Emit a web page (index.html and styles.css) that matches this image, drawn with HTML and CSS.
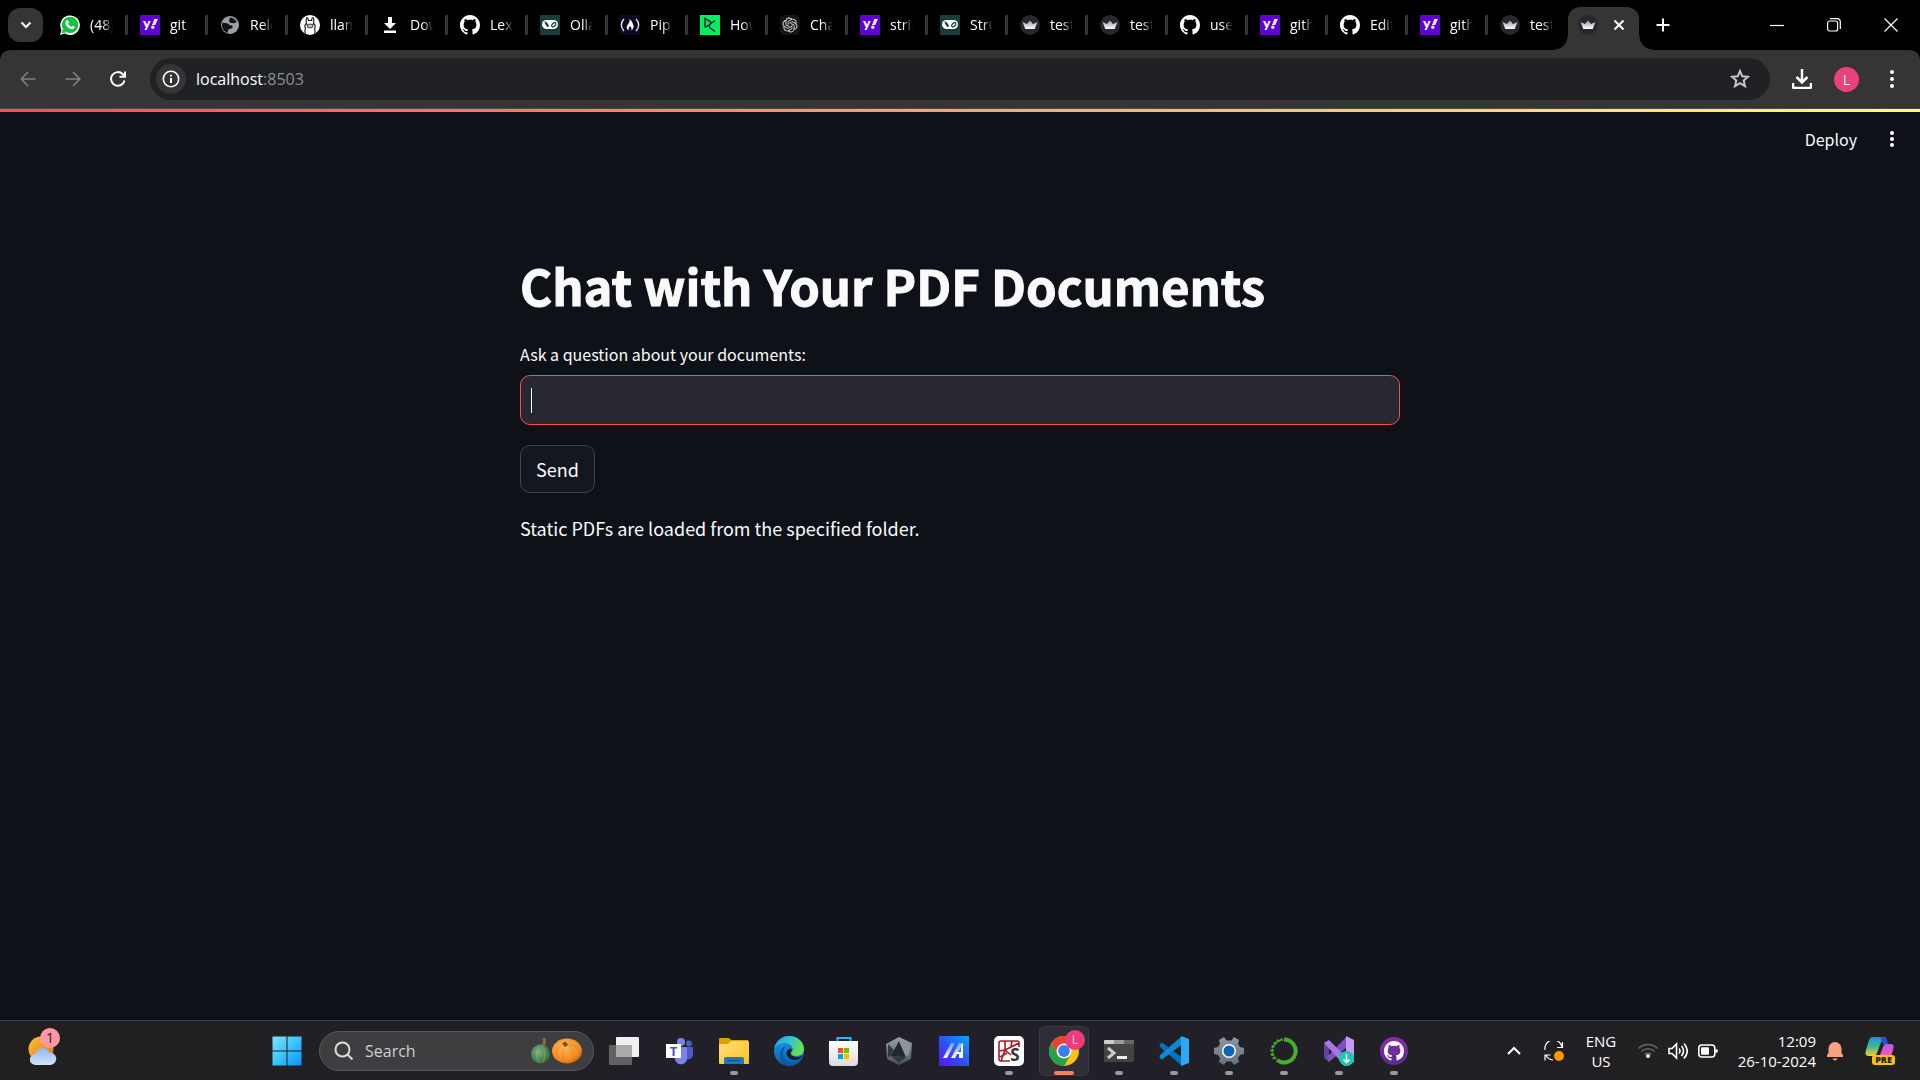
FILE: index.html
```html
<!DOCTYPE html>
<html lang="en">
<head>
<meta charset="utf-8">
<title>test</title>
<link rel="stylesheet" href="styles.css">
</head>
<body>
<svg class="sprite" aria-hidden="true">
  <defs>
    <linearGradient id="g-win" x1="0" y1="0" x2="1" y2="1"><stop offset="0" stop-color="#7fe0ff"/><stop offset=".5" stop-color="#3cc3fb"/><stop offset="1" stop-color="#0a8ffb"/></linearGradient>
    <linearGradient id="g-sun" x1="0" y1="0" x2="1" y2="1"><stop offset="0" stop-color="#f5c53a"/><stop offset="1" stop-color="#ef6c0c"/></linearGradient>
    <linearGradient id="g-cloud" x1="0" y1="0" x2="0" y2="1"><stop offset="0" stop-color="#8fb8f4"/><stop offset="1" stop-color="#d3e3fb"/></linearGradient>
    <linearGradient id="g-folder" x1="0" y1="0" x2="1" y2="1"><stop offset="0" stop-color="#ffe07a"/><stop offset="1" stop-color="#fbbf24"/></linearGradient>
    <linearGradient id="g-edge1" x1="0" y1="0" x2="1" y2=".5"><stop offset="0" stop-color="#1f9be0"/><stop offset=".5" stop-color="#35c1d6"/><stop offset="1" stop-color="#6be04a"/></linearGradient>
    <linearGradient id="g-edge2" x1="0" y1="0" x2="0" y2="1"><stop offset="0" stop-color="#1b9be6"/><stop offset="1" stop-color="#0b5fb4"/></linearGradient>
    <linearGradient id="g-store" x1="0" y1="0" x2="0" y2="1"><stop offset="0" stop-color="#ffffff"/><stop offset="1" stop-color="#dcdcdc"/></linearGradient>
    <linearGradient id="g-myasus" x1="0" y1="1" x2="1" y2="0"><stop offset="0" stop-color="#5a12f5"/><stop offset=".5" stop-color="#2a55f6"/><stop offset="1" stop-color="#0aa6fa"/></linearGradient>
    <linearGradient id="g-slash" x1="0" y1="0" x2="0" y2="1"><stop offset="0" stop-color="#fff" stop-opacity=".35"/><stop offset="1" stop-color="#fff"/></linearGradient>
    <linearGradient id="g-steel" x1="0" y1="0" x2="0" y2="1"><stop offset="0" stop-color="#9aa1a8"/><stop offset="1" stop-color="#4a5058"/></linearGradient>
    <linearGradient id="g-gear" x1="0" y1="0" x2="0" y2="1"><stop offset="0" stop-color="#8e979f"/><stop offset="1" stop-color="#66717b"/></linearGradient>
    <linearGradient id="g-cop1" x1="0" y1="0" x2="0" y2="1"><stop offset="0" stop-color="#1d8df0"/><stop offset=".5" stop-color="#3dba8c"/><stop offset="1" stop-color="#f4cf2a"/></linearGradient>
    <linearGradient id="g-cop2" x1="0" y1="0" x2="0" y2="1"><stop offset="0" stop-color="#b558e8"/><stop offset=".6" stop-color="#f0609a"/><stop offset="1" stop-color="#f68a4c"/></linearGradient>
    <radialGradient id="g-pumpkin" cx=".4" cy=".35" r=".75"><stop offset="0" stop-color="#ffb84f"/><stop offset=".7" stop-color="#f28c22"/><stop offset="1" stop-color="#b8560e"/></radialGradient>
    <radialGradient id="g-gourd" cx=".4" cy=".4" r=".7"><stop offset="0" stop-color="#7fb57a"/><stop offset="1" stop-color="#2f6238"/></radialGradient>
    <linearGradient id="g-ghd" x1="0" y1="0" x2="0" y2="1"><stop offset="0" stop-color="#8a2da8"/><stop offset="1" stop-color="#5a2a92"/></linearGradient>
    <linearGradient id="g-crown" x1="0" y1="0" x2="0" y2="1"><stop offset="0" stop-color="#9a9a9a"/><stop offset="1" stop-color="#ffffff"/></linearGradient>
  </defs>
  <symbol id="whatsapp" viewBox="0 0 20 20"><path fill="#fff" d="M0 20l1.500-5A9.800 9.800 0 1 1 5 18.600z"/><circle cx="10.100" cy="9.900" r="8.200" fill="#12c143"/><path fill="#12c143" d="M1.700 18.400l1.200-4.500 3.200 3.300z"/><path fill="#fff" d="M6.800 5.300c.4-.4 1.100-.3 1.300.2l.7 1.700c.1.300 0 .6-.8 1.500.7 1.400 1.900 2.500 3.300 3 .7-.9.900-1.100 1.300-1l1.900.9c.4.200.3 1-.1 1.500-.8 1-2.100 1.200-3.400.8-2.500-.8-4.500-2.700-5.400-5C5.100 7.500 5.800 6 6.800 5.300z"/></symbol>
  <symbol id="yahoo" viewBox="0 0 20 20"><path fill="#5f01d1" d="M0 0h20v20H0z"/><text x="3" y="13" font-family="Lato, sans-serif" font-weight="900" font-size="14" fill="#fff">y</text><path fill="#fff" d="M14.400 4H17.800L15.200 10H12z"/><circle cx="12.800" cy="12.200" r="1.600" fill="#fff"/></symbol>
  <symbol id="globe" viewBox="0 0 20 20"><circle cx="10" cy="10" r="9" fill="#9aa0a6"/><path fill="#111" d="M2.500 7.500l4 .8c2 0 2.500 2.200 4.500 2.200 2.200 0 2.200 2 .5 3l-3 .8-1 3.600A8 8 0 0 1 2.500 7.500zM10 2.500c3 .3 5.500 2 6.800 4.700l-3 1.100-3.800-.5-1-2.300z"/></symbol>
  <symbol id="llama" viewBox="0 0 20 20"><circle cx="10" cy="10" r="10" fill="#fff"/><path fill="none" stroke="#222" stroke-width="1.200" d="M5.500 18.500c-1-2-.8-3.500 0-5-1-2-.6-4 1-5C6 5 6 3 7 2.500c1 0 1.300 1.500 1.400 3h3.200c.1-1.500.4-3 1.400-3 1 .5 1 2.500.5 6 1.600 1 2 3 1 5 .8 1.500 1 3 0 5"/><ellipse cx="10" cy="11" rx="3" ry="2" fill="#bbb" stroke="#222" stroke-width=".8"/><circle cx="7" cy="9.500" r=".7" fill="#222"/><circle cx="13" cy="9.500" r=".7" fill="#222"/></symbol>
  <symbol id="get" viewBox="0 0 20 20"><path fill="#fff" d="M8 2h4v6h4l-6 6-6-6h4zM4 15.500h12V18H4z"/></symbol>
  <symbol id="github" viewBox="0 0 16 16"><path fill="#fff" d="M8 0C3.580 0 0 3.580 0 8c0 3.540 2.290 6.530 5.470 7.590.4.070.55-.17.55-.38 0-.19-.01-.82-.01-1.490-2.010.37-2.530-.49-2.690-.94-.09-.23-.48-.94-.82-1.130-.28-.15-.68-.52-.01-.53.63-.01 1.080.58 1.230.82.72 1.210 1.870.87 2.330.66.07-.52.28-.87.51-1.070-1.780-.2-3.640-.89-3.640-3.950 0-.87.31-1.590.82-2.150-.08-.2-.36-1.020.08-2.120 0 0 .67-.21 2.200.82.64-.18 1.320-.27 2-.27s1.360.09 2 .27c1.530-1.040 2.200-.82 2.200-.82.44 1.100.16 1.920.08 2.120.51.56.82 1.270.82 2.150 0 3.070-1.870 3.750-3.650 3.950.29.25.54.73.54 1.480 0 1.070-.01 1.930-.01 2.200 0 .21.15.46.55.38A8.010 8.010 0 0 0 16 8c0-4.420-3.580-8-8-8z"/></symbol>
  <symbol id="chain" viewBox="0 0 20 20"><path fill="#1c3c3c" d="M0 0h20v20H0z"/><rect x="2" y="5" width="16" height="9" rx="4.500" fill="#fff"/><path fill="#1c3c3c" d="M4.500 6.500c2 0 4 2.500 4.500 5-1.500 1-2.500.2-2.700-1C5.500 9.500 4.500 8 4.500 6.500z"/><path fill="none" stroke="#1c3c3c" stroke-width="1.200" d="M12 11.500a1.500 1.500 0 0 1 0-2l1.500-1.500a1.400 1.400 0 0 1 2 2l-1.500 1.500a1.400 1.400 0 0 1-2 0"/></symbol>
  <symbol id="fcc" viewBox="0 0 20 20"><path fill="#0a0a23" d="M0 0h20v20H0z"/><path fill="none" stroke="#eee" stroke-width="1.300" d="M4 4C.5 7.500.5 12.500 4 16M16 4c3.500 3.500 3.500 8.500 0 12"/><path fill="#fff" d="M9.500 4c3 2.500 3 4 3.800 6 .8 2.500-.3 4.500-2 5.500.5-1.500.3-3-1.300-4.500-1.300 1.500-1.800 3-1 4.500-2.500-1-3-3.500-1.500-5.500C9 8 10 6.500 9.500 4z"/></symbol>
  <symbol id="camp" viewBox="0 0 20 20"><path fill="#03ef62" d="M0 0h20v20H0z"/><path fill="none" stroke="#05192d" stroke-width="1.400" d="M5 12.500v-9l5.500 3.200v2.400L5 12.500M15 5.500l-5.500 4v3l5.500 4"/></symbol>
  <symbol id="gpt" viewBox="0 0 24 24"><rect width="24" height="24" rx="5" fill="#141414"/><path fill="#ddd" transform="translate(3 3) scale(.75)" d="M22.282 9.821a5.985 5.985 0 0 0-.516-4.910 6.046 6.046 0 0 0-6.510-2.900A6.065 6.065 0 0 0 4.981 4.182a5.985 5.985 0 0 0-3.998 2.900 6.046 6.046 0 0 0 .743 7.097 5.980 5.980 0 0 0 .51 4.911 6.051 6.051 0 0 0 6.515 2.900A5.985 5.985 0 0 0 13.260 24a6.056 6.056 0 0 0 5.772-4.206 5.990 5.990 0 0 0 3.998-2.900 6.056 6.056 0 0 0-.747-7.073zM13.260 22.430a4.476 4.476 0 0 1-2.876-1.040l.141-.081 4.779-2.758a.795.795 0 0 0 .393-.681v-6.737l2.020 1.168a.071.071 0 0 1 .038.052v5.583a4.504 4.504 0 0 1-4.495 4.494zM3.600 18.304a4.471 4.471 0 0 1-.535-3.014l.142.085 4.783 2.759a.771.771 0 0 0 .780 0l5.843-3.369v2.332a.080.080 0 0 1-.033.062L9.740 19.950a4.500 4.500 0 0 1-6.140-1.646zM2.341 7.896a4.485 4.485 0 0 1 2.366-1.973V11.600a.766.766 0 0 0 .388.677l5.815 3.355-2.020 1.168a.076.076 0 0 1-.071 0l-4.830-2.786A4.504 4.504 0 0 1 2.340 7.872zm16.597 3.856l-5.833-3.388L15.119 7.200a.076.076 0 0 1 .071 0l4.830 2.791a4.494 4.494 0 0 1-.676 8.105v-5.678a.790.790 0 0 0-.407-.667zm2.010-3.023l-.141-.085-4.774-2.782a.776.776 0 0 0-.785 0L9.409 9.230V6.897a.066.066 0 0 1 .028-.061l4.830-2.787a4.500 4.500 0 0 1 6.680 4.660zM8.307 12.863l-2.020-1.164a.080.080 0 0 1-.038-.057V6.075a4.500 4.500 0 0 1 7.375-3.453l-.142.080L8.704 5.460a.795.795 0 0 0-.393.681zm1.097-2.365l2.602-1.500 2.607 1.500v2.999l-2.597 1.500-2.607-1.500z"/></symbol>
  <symbol id="crown" viewBox="0 0 20 20"><circle cx="10" cy="10" r="10" fill="#262730"/><path fill="url(#g-crown)" d="M2.500 7l4.500 2 3-3.500 3 3.500 4.500-2-2.800 7H5.300z"/></symbol>
  <symbol id="chrome" viewBox="0 0 30 30"><circle cx="15" cy="15" r="15" fill="#fbc116"/><path fill="#ea4335" d="M2 7.500A15 15 0 0 1 28 7.500H15L8.500 18.700z"/><path fill="#25a04b" d="M2 7.500A15 15 0 0 0 15 30l6.500-11.200h-13z"/><circle cx="15" cy="15" r="7.500" fill="#fff"/><circle cx="15" cy="15" r="5.900" fill="#3b7fea"/></symbol>
</svg>

<header class="browser">
  <div class="strip">
    <button class="tab-search" aria-label="Search tabs"><svg width="12" height="8" viewBox="0 0 12 8"><path class="line bold" d="M1.500 1.500L6 6l4.500-4.500"/></svg></button>
    <nav class="tabs" aria-label="Tabs">
      <a class="tab" href="#"><svg class="fav"><use href="#whatsapp"/></svg><span class="name">(48)</span></a>
      <a class="tab" href="#"><svg class="fav"><use href="#yahoo"/></svg><span class="name">git</span></a>
      <a class="tab" href="#"><svg class="fav"><use href="#globe"/></svg><span class="name">Rele</span></a>
      <a class="tab" href="#"><svg class="fav"><use href="#llama"/></svg><span class="name">llam</span></a>
      <a class="tab" href="#"><svg class="fav"><use href="#get"/></svg><span class="name">Dow</span></a>
      <a class="tab" href="#"><svg class="fav"><use href="#github"/></svg><span class="name">Lex</span></a>
      <a class="tab" href="#"><svg class="fav"><use href="#chain"/></svg><span class="name">Olla</span></a>
      <a class="tab" href="#"><svg class="fav"><use href="#fcc"/></svg><span class="name">Pip</span></a>
      <a class="tab" href="#"><svg class="fav"><use href="#camp"/></svg><span class="name">How</span></a>
      <a class="tab" href="#"><svg class="fav"><use href="#gpt"/></svg><span class="name">Cha</span></a>
      <a class="tab" href="#"><svg class="fav"><use href="#yahoo"/></svg><span class="name">strin</span></a>
      <a class="tab" href="#"><svg class="fav"><use href="#chain"/></svg><span class="name">StrO</span></a>
      <a class="tab" href="#"><svg class="fav"><use href="#crown"/></svg><span class="name">test</span></a>
      <a class="tab" href="#"><svg class="fav"><use href="#crown"/></svg><span class="name">test</span></a>
      <a class="tab" href="#"><svg class="fav"><use href="#github"/></svg><span class="name">use</span></a>
      <a class="tab" href="#"><svg class="fav"><use href="#yahoo"/></svg><span class="name">gith</span></a>
      <a class="tab" href="#"><svg class="fav"><use href="#github"/></svg><span class="name">Edit</span></a>
      <a class="tab" href="#"><svg class="fav"><use href="#yahoo"/></svg><span class="name">gith</span></a>
      <a class="tab last" href="#"><svg class="fav"><use href="#crown"/></svg><span class="name">test</span></a>
      <div class="tab-active"><svg class="fav"><use href="#crown"/></svg><button class="plain" aria-label="Close tab"><svg width="12" height="12" viewBox="0 0 12 12"><path class="line bold" d="M1.500 1.500l9 9M10.500 1.500l-9 9"/></svg></button></div>
    </nav>
    <button class="plain new-tab" aria-label="New tab"><svg width="14" height="14" viewBox="0 0 14 14"><path class="line bold" d="M7 .5v13M.5 7h13"/></svg></button>
    <div class="window-controls">
      <button class="plain" aria-label="Minimize"><svg width="14" height="14" viewBox="0 0 14 14"><path class="line" d="M0 7.500h14"/></svg></button>
      <button class="plain" aria-label="Restore"><svg width="14" height="14" viewBox="0 0 14 14"><rect class="line" x=".6" y="3" width="10" height="10" rx="2"/><path class="line" d="M3 .7h7A3.300 3.300 0 0 1 13.300 4v7"/></svg></button>
      <button class="plain" aria-label="Close"><svg width="14" height="14" viewBox="0 0 14 14"><path class="line" d="M.5.5l13 13M13.500.5l-13 13"/></svg></button>
    </div>
  </div>
  <div class="toolbar">
    <button class="plain nav-button dim" aria-label="Back"><svg width="16" height="16" viewBox="0 0 16 16"><path class="line medium" d="M15.500 8H1.500M8 1L1.200 8 8 15"/></svg></button>
    <button class="plain nav-button dim" aria-label="Forward"><svg width="16" height="16" viewBox="0 0 16 16"><path class="line medium" d="M.5 8h14M8 1l6.800 7L8 15"/></svg></button>
    <button class="plain nav-button" aria-label="Reload"><svg width="16" height="16" viewBox="0 0 16 16"><path class="line bold" d="M14.500 9.500A6.800 6.800 0 1 1 12.800 3.200L15 5.400M15 .5v5.300H9.500"/></svg></button>
    <div class="omnibox">
      <span class="info"><svg width="18" height="18" viewBox="0 0 18 18"><circle class="line medium" cx="9" cy="9" r="7.700"/><path class="line bold" d="M9 8v5M9 4.800v1.800"/></svg></span>
      <span class="url">localhost<span class="port">:8503</span></span>
      <button class="plain" aria-label="Bookmark"><svg width="20" height="20" viewBox="0 0 20 20"><path class="star" d="M10 2l2.300 5.300 5.700.5-4.300 3.800 1.300 5.600L10 14.200l-5 3 1.300-5.600L2 7.800l5.700-.5z"/></svg></button>
    </div>
    <button class="plain tool" aria-label="Downloads"><svg width="20" height="20" viewBox="0 0 20 20"><path class="line heavy" d="M10 0v13M4.500 8l5.500 5.500L15.500 8M1 14v3.500q0 1.500 1.500 1.500h15q1.500 0 1.500-1.500V14"/></svg></button>
    <button class="plain tool" aria-label="Profile"><span class="avatar">L</span></button>
    <button class="plain tool" aria-label="Menu"><svg width="4" height="18" viewBox="0 0 4 18"><circle cx="2" cy="2" r="2"/><circle cx="2" cy="9" r="2"/><circle cx="2" cy="16" r="2"/></svg></button>
  </div>
</header>

<main class="app">
  <div class="app-header">
    <button class="plain deploy">Deploy</button>
    <button class="plain tool" aria-label="App menu"><svg width="4" height="18" viewBox="0 0 4 18"><circle cx="2" cy="3" r="2"/><circle cx="2" cy="9" r="2"/><circle cx="2" cy="15" r="2"/></svg></button>
  </div>
  <form class="content">
    <h1>Chat with Your PDF Documents</h1>
    <label for="question">Ask a question about your documents:</label>
    <input id="question" type="text" autocomplete="off">
    <button class="send" type="button">Send</button>
    <p>Static PDFs are loaded from the specified folder.</p>
  </form>
</main>

<footer class="taskbar">
  <div class="side">
    <button class="plain" aria-label="Weather"><svg width="32" height="40" viewBox="0 0 32 40">
      <circle cx="13" cy="22" r="12.500" fill="url(#g-sun)"/><path fill="url(#g-cloud)" d="M8 38a6 5.500 0 0 1-.5-11 7.500 7.500 0 0 1 14-1.500A6.300 6.300 0 0 1 23 38z"/><circle cx="22" cy="11" r="10" fill="#ff98a2"/><text x="22" y="16" text-anchor="middle" font-family="Open Sans, sans-serif" font-size="14" fill="#222">1</text></svg></button>
  </div>
  <nav class="dock" aria-label="Taskbar">
    <button class="plain app-tile" aria-label="Start"><svg width="30" height="30" viewBox="0 0 30 30"><path fill="url(#g-win)" d="M.5.500h14v14H.5zM15.500.5h14v14h-14zM.5 15.500h14v14H.5zM15.500 15.500h14v14h-14z"/></svg></button>
    <div class="search">
      <svg width="20" height="20" viewBox="0 0 20 20"><circle class="line bold" cx="8.500" cy="8.500" r="7"/><path class="line bold" d="M13.500 13.500L18.500 18.500"/></svg>
      <input type="search" placeholder="Search" aria-label="Search">
      <svg width="54" height="28" viewBox="0 0 54 28"><path fill="none" stroke="#8a6652" stroke-width="3" d="M13 11c2-3 3-5 2-10"/><ellipse cx="11.500" cy="17" rx="9.500" ry="9.500" fill="url(#g-gourd)"/><path fill="none" stroke="#b5d6a5" opacity=".3" d="M11.500 8c-5 3-5 14-1 18M12 8c5 3 5 14 1 18"/><ellipse cx="38" cy="14" rx="15" ry="12.500" fill="url(#g-pumpkin)"/><path fill="none" stroke="#b8600f" opacity=".25" d="M35 8c-9 2-9 12-4 17M36 8c-3 5-3 14 0 18M38 8c7 3 8 12 5 17M39 7c10 2 13 8 10 14"/><path fill="#6c4b2c" d="M33 6l4-1 2 3-3 2z"/></svg>
    </div>
    <button class="plain app-tile" aria-label="Task view"><svg width="30" height="30" viewBox="0 0 30 30"><rect x="7" y="1" width="23" height="20" rx="1" fill="#f0f0f0"/><rect x="0" y="9" width="23" height="20" rx="1" fill="#777" opacity=".75"/><rect x="7" y="9" width="16" height="12" fill="#aaa"/></svg></button>
    <button class="plain app-tile" aria-label="Teams"><svg width="30" height="30" viewBox="0 0 30 30"><circle cx="17" cy="6" r="4" fill="#7b83eb"/><circle cx="25" cy="7.500" r="3" fill="#5059c9"/><path fill="#5059c9" d="M20 11h9v8a5 5 0 0 1-7 4z"/><path fill="#7b83eb" d="M11 11h12v9a6 6 0 0 1-12 4z"/><rect x="2" y="8" width="15" height="14" fill="#fff"/><text x="9.500" y="20" text-anchor="middle" font-family="Open Sans, sans-serif" font-weight="700" font-size="13" fill="#4b53bc">T</text></svg></button>
    <button class="plain app-tile running" aria-label="File Explorer"><svg width="30" height="30" viewBox="0 0 30 30"><path fill="#dfa000" d="M0 3q0-1 1-1h8q2 0 3 2h17v8H0z"/><path fill="url(#g-folder)" d="M0 9q0-1 2-1h7l3-3h17q1 0 1 1v21q0 1-1 1H1q-1 0-1-1z"/><path fill="#157bc4" d="M5 28v-5q0-2 2-2h16q2 0 2 2v5z"/><path fill="#0c4f8a" d="M8 24h13v1H8z"/></svg></button>
    <button class="plain app-tile" aria-label="Edge"><svg width="30" height="30" viewBox="0 0 30 30"><circle cx="15" cy="15" r="15" fill="url(#g-edge2)"/><path fill="url(#g-edge1)" d="M0 13C2 4 9 0 15 0c9 0 15 6 15 13 0 5-4 7-8 7-3 0-5-1-5-3 0-1 2-1 2-4 0-2-3-6-8-6C6 7 1 10 0 13z"/><path fill="#0c59a4" d="M12 10c-4 3-4 11 0 15 4 3 11 3 16-2a15 15 0 0 1-13 7C9 30 5 25 6 19c0-5 2-8 6-9z"/><path fill="#212026" d="M18 13c0 2-1.500 3-1.500 4 0 2 3 4 6 4 3 0 5-.5 6.500-2-1 3-4 5-8 5-5 0-8.500-3-8.500-7 0-3 2.500-5 5.500-4z"/></svg></button>
    <button class="plain app-tile" aria-label="Store"><svg width="30" height="30" viewBox="0 0 30 30"><path fill="none" stroke="#2fb8ef" stroke-width="2" d="M8.500 7V2h13v5"/><path fill="url(#g-store)" d="M0 5h29v21q0 4-4 4H4q-4 0-4-4z"/><path fill="#f25022" d="M9 12h5v5H9z"/><path fill="#7fba00" d="M15 12h5v5h-5z"/><path fill="#00a4ef" d="M9 18h5v5H9z"/><path fill="#ffb900" d="M15 18h5v5h-5z"/></svg></button>
    <button class="plain app-tile" aria-label="Armoury"><svg width="30" height="30" viewBox="0 0 30 30"><path fill="url(#g-steel)" d="M15 1l13 6-1 16-12 6-12-6L2 8z"/><path fill="#23262c" d="M15 5l7 16-15-1z"/><path fill="#8d949b" d="M15 5l7 16 3-3 1-9z"/><path fill="#343940" d="M4 8l6 6-3 6-3 1zM7 20l15 1-7 6z"/></svg></button>
    <button class="plain app-tile" aria-label="MyASUS"><svg width="30" height="30" viewBox="0 0 30 30"><path fill="url(#g-myasus)" d="M0 0h30v30H0z"/><path fill="url(#g-slash)" d="M12 7h4L8 22H4zM20 7h4l-8 15h-4z"/><path fill="#fff" d="M22 9l2-2v15h-4v-4h-4l2-2h4z"/></svg></button>
    <button class="plain app-tile running" aria-label="Spyder"><svg width="30" height="30" viewBox="0 0 30 30"><rect width="30" height="30" rx="5" fill="#fff"/><path fill="none" stroke="#a51f27" stroke-width="1.600" d="M16 25H7q-2 0-2-2V7q0-2 2-2h16q2 0 2 2v4M5 15l6-1V5M11 14l14-7M11 14l-4 11M11 14l6 5M18 5l-1 6M6 21l7-4"/><text x="21" y="25" text-anchor="middle" font-family="Open Sans, sans-serif" font-weight="700" font-size="17" fill="#333">S</text></svg></button>
    <button class="plain app-tile running current" aria-label="Chrome"><svg width="30" height="30" viewBox="0 0 30 30"><use href="#chrome"/></svg><span class="badge">L</span></button>
    <button class="plain app-tile running" aria-label="Terminal"><svg width="30" height="30" viewBox="0 0 30 30"><rect y="4" width="30" height="22" rx="1" fill="#444"/><path fill="#ccc" d="M0 5q0-1 1-1h9v4H0z"/><path fill="#999" d="M10 4h10v4H10z"/><path fill="#666" d="M20 4h9q1 0 1 1v3H20z"/><path fill="none" stroke="#ccc" stroke-width="3" d="M4 12l6 5-6 5"/><path fill="#eee" d="M13 20h10v3H13z"/></svg></button>
    <button class="plain app-tile running" aria-label="VS Code"><svg width="30" height="30" viewBox="0 0 30 30"><path fill="#0072b8" d="M1 8l2-1.500 20 15V30L1 11q-1-1.500 0-3z"/><path fill="#1088d6" d="M1 22l2 1.500 20-15V0L1 19q-1 1.500 0 3z"/><path fill="#2aa9f2" d="M22 0l8 3v24l-8 3z"/></svg></button>
    <button class="plain app-tile running" aria-label="Settings"><svg width="30" height="30" viewBox="0 0 30 30"><path fill="url(#g-gear)" d="M10 1l2.500 3.500h5L20 1l5 3-1 4 2 3 4 1v6l-4 1-2 3 1 4-5 3-2.500-3.500h-5L10 29l-5-3 1-4-2-3-4-1v-6l4-1 2-3-1-4z"/><circle cx="15" cy="15" r="7" fill="#fff"/><circle cx="15" cy="15" r="5.500" fill="#0b63ba"/></svg></button>
    <button class="plain app-tile running" aria-label="Anaconda"><svg width="30" height="30" viewBox="0 0 30 30"><path fill="none" stroke="#43b02a" stroke-width="4" d="M15 3.500A11.500 11.500 0 1 1 8 24"/><path fill="none" stroke="#43b02a" stroke-width="2" stroke-dasharray="3 1" d="M7 23A11 11 0 0 1 14 4"/><path fill="none" stroke="#43b02a" stroke-width="2" stroke-dasharray="2 2" d="M5 23A12.500 12.500 0 0 1 13 3"/></svg></button>
    <button class="plain app-tile running" aria-label="Visual Studio Installer"><svg width="30" height="30" viewBox="0 0 30 30"><path fill="#6b3fa0" d="M0 7l5-3v22l-5-4z"/><path fill="#7d4fc0" d="M5 26l18-15 0-11-18 19-2 2z"/><path fill="#a679e0" d="M0 7l5-3 18 18-2 8z"/><path fill="#c79bf5" d="M22 0l8 4v22l-8 4z"/><circle cx="22.500" cy="22.500" r="7.500" fill="#1cc8b4"/><path fill="none" stroke="#fff" stroke-width="1.500" d="M22.500 18v8M19.500 23.500l3 3 3-3"/></svg></button>
    <button class="plain app-tile running" aria-label="GitHub Desktop"><svg width="30" height="30" viewBox="0 0 30 30"><circle cx="15" cy="15" r="14" fill="url(#g-ghd)"/><use href="#github" x="5" y="5" width="20" height="20"/></svg></button>
  </nav>
  <div class="tray">
    <button class="plain tray-item" aria-label="Hidden icons"><svg width="14" height="10" viewBox="0 0 14 10"><path class="line bold" d="M1 8l6-6 6 6"/></svg></button>
    <button class="plain tray-item" aria-label="Updates"><svg width="20" height="20" viewBox="0 0 20 20"><path class="line" d="M1 9a8.500 8.500 0 0 1 17-3M18.500 1v5.500H13M1 19.500V14h5.500M2 14.500a9 9 0 0 0 7 4.500"/><circle cx="15" cy="15" r="5" fill="#ff9800"/></svg></button>
    <button class="plain lang">ENG<br>US</button>
    <button class="plain status" aria-label="Network, sound, battery">
      <svg width="20" height="20" viewBox="0 0 20 20"><path fill="none" stroke="#666" stroke-width="1.500" d="M.5 7.500a13.500 13.500 0 0 1 19 0M3.500 10.500a9.300 9.300 0 0 1 13 0M6.500 13.500a5 5 0 0 1 7 0"/><circle cx="10" cy="15" r="2"/></svg>
      <svg width="20" height="20" viewBox="0 0 20 20"><path class="line medium" d="M1 7.500h3L8.500 3v14L4 12.500H1zM11 7.500q2 2.500 0 5M13.500 5q4 5 0 10M16 2.500q6.500 7.500 0 15"/></svg>
      <svg width="20" height="20" viewBox="0 0 20 20"><rect class="line medium" x=".8" y="4" width="16" height="12" rx="3"/><rect x="3" y="6.200" width="8" height="7.600" rx="1"/><path d="M17.500 8q2.500 0 2.500 2t-2.500 2z"/></svg>
    </button>
    <button class="plain clock">12:09<br>26-10-2024</button>
    <button class="plain" aria-label="Notifications"><svg width="18" height="20" viewBox="0 0 18 20"><path fill="#f9a283" d="M1 16v-2l1.500-2V7.500a6.500 6.500 0 0 1 13 0V12l1.500 2v2zM6.500 17.500h5q-.5 2-2.500 2t-2.500-2z"/></svg></button>
    <button class="plain copilot" aria-label="Copilot"><svg width="30" height="30" viewBox="0 0 30 30"><path fill="url(#g-cop1)" d="M8 1h11q3 0 2 4h-3q-2 0-3 4l-3 8q-1 3-4 3H4q-5 0-3-6l3-10q1-3 4-3z"/><path fill="#2352d8" d="M15 1h4q2 0 3 3l1 4h-5z"/><path fill="url(#g-cop2)" d="M20 8h6q4 0 2 6l-3 10q-1 4-5 4h-9q-3 0-3-5h3q3 0 4-4l3-8q1-3 2-3z"/><rect x="7" y="19" width="23" height="10" rx="3" fill="#ffc400"/><text x="18.500" y="27" text-anchor="middle" font-family="Open Sans, sans-serif" font-weight="800" font-size="9" fill="#222">PRE</text></svg></button>
  </div>
</footer>
</body>
</html>
```
FILE: styles.css
```css
* { box-sizing: border-box; }

html, body { height: 100%; }

body {
  margin: 0;
  display: flex;
  flex-direction: column;
  min-height: 100vh;
  overflow: hidden;
  background: #0e1117;
  color: #fff;
  font-family: "Open Sans", "Noto Sans", sans-serif;
}

.sprite { position: absolute; width: 0; height: 0; }

svg { display: block; flex: none; fill: #fff; }

.line { fill: none; stroke: #fff; stroke-width: 1.2; }
.medium { stroke-width: 1.6; }
.bold { stroke-width: 2; }
.heavy { stroke-width: 2.5; }

.plain {
  display: flex;
  align-items: center;
  justify-content: center;
  flex: none;
  padding: 0;
  border: 0;
  background: none;
  color: inherit;
  font: inherit;
}

/* Browser window */
.browser { background: #000; }

.strip {
  display: flex;
  align-items: center;
  height: 50px;
  padding-left: 8px;
}

.tab-search {
  display: flex;
  align-items: center;
  justify-content: center;
  flex: none;
  width: 35px;
  height: 34px;
  margin-right: 5px;
  padding: 0;
  border: 0;
  border-radius: 12px;
  background: #353535;
}

.tabs { display: flex; align-self: stretch; }

.tab {
  display: flex;
  align-items: center;
  gap: 10px;
  width: 80px;
  padding-left: 12px;
  color: #fff;
  text-decoration: none;
  font-size: 14px;
  line-height: 20px;
}

.tab::after {
  content: "";
  width: 3px;
  height: 20px;
  margin-left: 2px;
  border-radius: 1px;
  background: #353535;
}

.tab.last::after { visibility: hidden; }

.fav { width: 20px; height: 20px; }

.name {
  flex: none;
  width: 23px;
  overflow: hidden;
  white-space: nowrap;
  -webkit-mask-image: linear-gradient(90deg, #000 55%, transparent);
  mask-image: linear-gradient(90deg, #000 55%, transparent);
}

.tab-active {
  position: relative;
  display: flex;
  align-items: center;
  gap: 15px;
  width: 71px;
  margin-top: 7px;
  padding: 0 0 7px 10px;
  border-radius: 12px 12px 0 0;
  background: #353535;
}

.tab-active::before,
.tab-active::after {
  content: "";
  position: absolute;
  bottom: 0;
  width: 14px;
  height: 14px;
}

.tab-active::before {
  right: 100%;
  background: radial-gradient(circle at 0 0, transparent 13px, #353535 14px);
}

.tab-active::after {
  left: 100%;
  background: radial-gradient(circle at 100% 0, transparent 13px, #353535 14px);
}

.new-tab { width: 48px; height: 34px; }

.window-controls { display: flex; margin-left: auto; padding-right: 1px; }
.window-controls .plain { width: 57px; height: 48px; }

.toolbar {
  display: flex;
  align-items: center;
  height: 59px;
  padding: 0 6px 0 5px;
  border-radius: 10px 10px 0 0;
  border-bottom: 1px solid #4a4a4a;
  background: #353535;
}

.nav-button { width: 45px; height: 40px; }
.dim .line { stroke: #808080; }

.omnibox {
  display: flex;
  align-items: center;
  flex: 1;
  height: 42px;
  margin: 0 9px 0 10px;
  padding: 0 20px 0 6px;
  border-radius: 21px;
  background: #202124;
}

.info {
  display: flex;
  align-items: center;
  justify-content: center;
  width: 30px;
  height: 30px;
  margin-right: 10px;
  border-radius: 50%;
  background: #353535;
}

.url { flex: 1; font-size: 16px; line-height: 24px; }
.port { color: #8b8e92; }
.star { fill: none; stroke: #c4c7c5; stroke-width: 2; }

.tool { width: 45px; height: 40px; }

.avatar {
  width: 25px;
  height: 25px;
  border-radius: 50%;
  background: #ec407a;
  font-size: 14px;
  line-height: 25px;
  text-align: center;
}

/* Application page */
.app {
  flex: 1;
  background: linear-gradient(90deg, #ff4b4b, #fffd80) top / 100% 3px no-repeat #0e1117;
  color: #fafafa;
  font-family: "Noto Sans CJK SC", sans-serif;
}

.app-header {
  display: flex;
  align-items: center;
  justify-content: flex-end;
  height: 60px;
  padding-right: 6px;
}

.deploy { margin-right: 12px; font-size: 16px; line-height: 24px; }

.content {
  display: flex;
  flex-direction: column;
  align-items: flex-start;
  max-width: 880px;
  margin: 0 auto;
  padding-top: 78px;
}

h1 {
  margin: 0 0 19px;
  font-size: 49px;
  font-weight: 700;
  line-height: 76px;
  -webkit-text-stroke: 1px #fafafa;
}

label { margin-bottom: 9px; font-size: 16px; line-height: 24px; }

#question {
  width: 100%;
  height: 50px;
  margin-bottom: 20px;
  padding: 0 10px;
  border: 1px solid #ff4b4b;
  border-radius: 10px;
  outline: 0;
  background: linear-gradient(#fafafa, #fafafa) 10px 12px / 1px 25px no-repeat #262730;
  color: #fafafa;
  font: inherit;
}

.send {
  height: 48px;
  margin-bottom: 19px;
  padding: 0 15px;
  border: 1px solid #41444c;
  border-radius: 10px;
  background: #131720;
  color: #fafafa;
  font: inherit;
  font-size: 18px;
  line-height: 32px;
}

p { margin: 0; font-size: 18px; line-height: 32px; }

/* Taskbar */
.taskbar {
  display: flex;
  align-items: center;
  height: 60px;
  border-top: 1px solid #444448;
  background: linear-gradient(90deg, #202020, #212028 35%, #212028 60%, #202020);
}

.side { width: 262px; padding: 0 0 8px 28px; }
.side .plain { justify-content: flex-start; }

.dock { display: flex; align-items: center; gap: 5px; }

.app-tile {
  position: relative;
  width: 50px;
  height: 50px;
  border: 1px solid transparent;
  border-radius: 5px;
}

.running::after {
  content: "";
  position: absolute;
  bottom: 0;
  left: 50%;
  width: 8px;
  height: 4px;
  margin-left: -4px;
  border-radius: 2px;
  background: #9a9a9c;
}

.current { border-color: #3a393f; background: #2f2e36; }

.current::after { width: 20px; margin-left: -10px; background: #f58067; }

.badge {
  position: absolute;
  top: 3px;
  right: 3px;
  width: 20px;
  height: 20px;
  border-radius: 50%;
  background: #e93e78;
  color: #f6c9da;
  font-size: 12px;
  line-height: 20px;
}

.search {
  display: flex;
  align-items: center;
  width: 275px;
  height: 40px;
  margin-left: 2px;
  padding: 0 10px 0 14px;
  border: 1px solid #57565a;
  border-radius: 20px;
  background: #3e3d40;
}

.search .line { stroke: #dcdcdc; }

.search input {
  flex: 1;
  min-width: 0;
  height: 30px;
  padding: 0 11px;
  border: 0;
  outline: 0;
  background: none;
  color: #fff;
  font-family: inherit;
  font-size: 16px;
}

.search input::placeholder { color: #cfcfcf; opacity: 1; }

.tray {
  display: flex;
  align-items: center;
  margin-left: auto;
  padding-right: 25px;
  font-size: 15px;
  line-height: 20px;
  white-space: nowrap;
}

.tray-item { width: 40px; height: 40px; }
.lang { width: 54px; margin-right: 10px; text-align: center; }
.status { gap: 10px; margin-right: 18px; }
.clock { width: 80px; margin-right: 10px; text-align: right; justify-content: flex-end; }
.copilot { margin-left: 21px; }
```
